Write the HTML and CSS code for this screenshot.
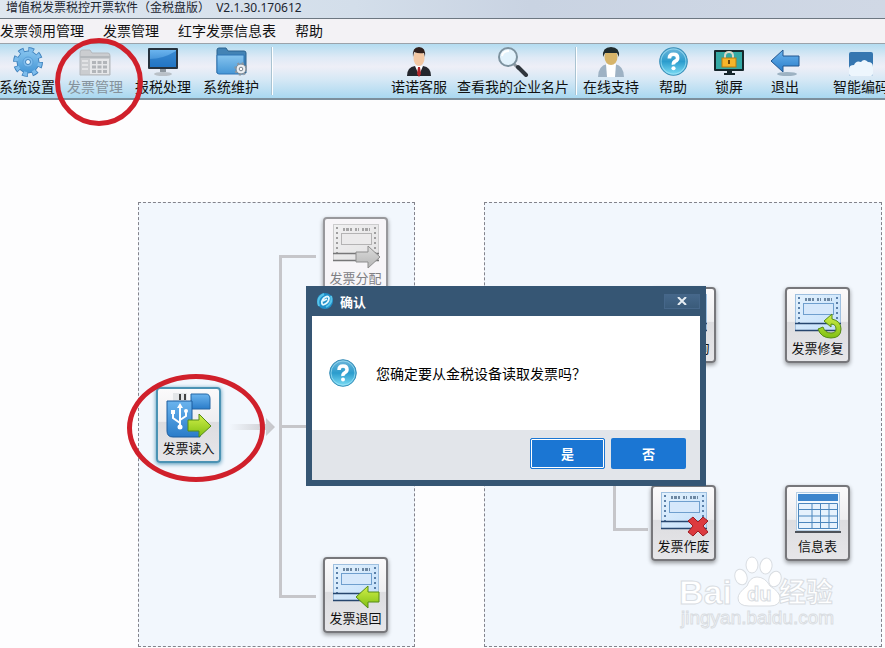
FILE: index.html
```
<!DOCTYPE html>
<html lang="zh-CN">
<head>
  <meta charset="UTF-8" />
  <meta name="viewport" content="width=device-width, initial-scale=1.0"/>
  <title>增值税发票税控开票软件（金税盘版）</title>
  <link rel="stylesheet" href="styles.css">
</head>
<body>
  <!-- shared gradients and symbols -->
  <svg class="defs" aria-hidden="true">
    <defs>
      <linearGradient id="blue" x1="0" y1="0" x2="0" y2="1">
        <stop offset="0" stop-color="#6bb4ee"/><stop offset="1" stop-color="#2a7cc9"/>
      </linearGradient>
      <linearGradient id="folder" x1="0" y1="0" x2="0" y2="1">
        <stop offset="0" stop-color="#86c4ee"/><stop offset="1" stop-color="#4596d6"/>
      </linearGradient>
      <linearGradient id="sky" x1="0" y1="0" x2="0" y2="1">
        <stop offset="0" stop-color="#6fb6da"/><stop offset=".5" stop-color="#2b9ccd"/><stop offset="1" stop-color="#7fe0f7"/>
      </linearGradient>
      <linearGradient id="green" x1="0" y1="0" x2="0" y2="1">
        <stop offset="0" stop-color="#d3f04a"/><stop offset="1" stop-color="#7fbf12"/>
      </linearGradient>
      <linearGradient id="gray" x1="0" y1="0" x2="0" y2="1">
        <stop offset="0" stop-color="#dcdcdc"/><stop offset="1" stop-color="#b5b5b5"/>
      </linearGradient>
      <linearGradient id="paper" x1="0" y1="0" x2="1" y2="1">
        <stop offset="0" stop-color="#e3f1fd"/><stop offset="1" stop-color="#c3dffa"/>
      </linearGradient>
      <linearGradient id="fade" x1="0" y1="0" x2="1" y2="0">
        <stop offset="0" stop-color="#c8c8cc" stop-opacity="0"/><stop offset="1" stop-color="#c4c4c8"/>
      </linearGradient>
    </defs>
    <symbol id="invoice" viewBox="0 0 48 46">
      <rect x="1.500" y="1.500" width="45" height="36" fill="url(#paper)" stroke="#9fc0e0"/>
      <path d="M5 4v26M43 4v26" stroke="#5a7fa8" stroke-width="2" stroke-dasharray="2 3"/>
      <path d="M11 6.500h9M23 6.500h4M30 6.500h8" stroke="#6d87a2" stroke-width="3" stroke-dasharray="2 1 3 1"/>
      <rect x="9.500" y="10.500" width="30" height="11" fill="#d6e8fb" stroke="#6f9fce"/>
      <path d="M1 30.500h46M1 37.500h46" stroke="#27466e" stroke-width="1.500"/>
    </symbol>
    <symbol id="help" viewBox="0 0 28 28">
      <circle cx="14" cy="14" r="13.300" fill="url(#sky)" stroke="#3a8fb8"/>
      <circle cx="14" cy="14" r="12" fill="none" stroke="#a5e2f5" stroke-opacity=".7"/>
      <path d="M10 11q0-4 4-4t4 3.500q0 2-2.200 3.200T14 17" fill="none" stroke="#fff" stroke-width="3.500"/>
      <circle cx="14" cy="20.500" r="2" fill="#fff"/>
    </symbol>
  </svg>

  <header class="titlebar">
    <h1>增值税发票税控开票软件（金税盘版） <span>V2.1.30.170612</span></h1>
  </header>

  <nav class="menubar">
    <button>发票领用管理</button>
    <button>发票管理</button>
    <button>红字发票信息表</button>
    <button>帮助</button>
  </nav>

  <div class="toolbar">
    <div class="tools main-tools">
      <button class="tool">
        <svg viewBox="0 0 32 30">
          <circle cx="17" cy="15" r="12.500" fill="none" stroke="#3f82bd" stroke-width="5" stroke-dasharray="5.500 4.317"/>
          <circle cx="17" cy="15" r="11" fill="url(#folder)" stroke="#3f82bd"/>
          <circle cx="17" cy="15" r="12" fill="none" stroke="#7dbcec" stroke-width="4" stroke-dasharray="3.900 5.525" stroke-dashoffset="-.7"/>
          <circle cx="17" cy="15" r="5" fill="#7fbeee" stroke="#5a9fd8"/>
          <circle cx="17" cy="15" r="2.500" fill="#e8f5fd" stroke="#3b7fba"/>
        </svg>
        <span>系统设置</span>
      </button>
      <button class="tool" disabled>
        <svg viewBox="0 0 32 30">
          <path d="M1 6q0-3 2-3h8l2 3h16q2 0 2 3v19H1z" fill="#cbcdd0" stroke="#b4b8bc"/>
          <path d="M1 10h30" stroke="#b4b8bc" stroke-width="2"/>
          <path d="M3 14h6M3 18h6M3 22h6" stroke="#e2e3e5" stroke-width="2"/>
          <path d="M11 12h19v15H11z" fill="#e6e7e9"/>
          <path d="M13 15.500h15M13 20h15M13 24.500h15" stroke="#b2b5b9" stroke-width="3" stroke-dasharray="4 1.500"/>
        </svg>
        <span>发票管理</span>
      </button>
      <button class="tool">
        <svg viewBox="0 0 32 30">
          <rect x="1" y="1" width="30" height="21" rx="1" fill="#26323e"/>
          <rect x="3" y="3" width="26" height="17" fill="url(#blue)"/>
          <path d="M3 20V12Q16 12 29 4v16z" fill="#1d6fc0" opacity=".6"/>
          <path d="M13 22h6v3h-6z" fill="#8d969e"/>
          <ellipse cx="16" cy="27" rx="9" ry="2" fill="#b9c0c7"/>
        </svg>
        <span>报税处理</span>
      </button>
      <button class="tool">
        <svg viewBox="0 0 32 30">
          <path d="M2 3q0-2 2-2h7l2 3h16q2 0 2 2v20H2z" fill="#4383b5" stroke="#2b638f"/>
          <path d="M2 8h27v18q0 1-1 1H4q-2 0-2-2z" fill="url(#folder)" stroke="#2f75b5"/>
          <circle cx="26" cy="22" r="5" fill="#e5e9ed" stroke="#77828c"/>
          <circle cx="26" cy="22" r="5.800" fill="none" stroke="#8c969f" stroke-width="2" stroke-dasharray="2 2.560"/>
          <circle cx="26" cy="22" r="4" fill="#eceff2"/>
          <circle cx="26" cy="22" r="1.800" fill="#fff" stroke="#77828c"/>
        </svg>
        <span>系统维护</span>
      </button>
      <span class="sep"></span>
    </div>

    <div class="tools service-tools">
      <button class="tool">
        <svg viewBox="0 0 32 30">
          <path d="M4 29q0-9 8-10h8q8 1 8 10z" fill="#23262d"/>
          <path d="M12 19l4 9 4-9z" fill="#fff"/>
          <path d="M15 20h2l1 7-2 3-2-3z" fill="#b3262b"/>
          <ellipse cx="16" cy="11" rx="5.500" ry="8" fill="#f3c8a4"/>
          <path d="M10 10Q9 0 16 0t6 10l-1-4q-5 1-10-1z" fill="#30201d"/>
        </svg>
        <span>诺诺客服</span>
      </button>
      <button class="tool">
        <svg viewBox="0 0 32 30">
          <path d="M17 17l5 5" stroke="#8d969e" stroke-width="3"/>
          <path d="M21 20l8 8" stroke="#30363d" stroke-width="4" stroke-linecap="round"/>
          <circle cx="11" cy="10" r="9" fill="#e2f2fc" stroke="#7d929f" stroke-width="2"/>
          <path d="M5 9q1-5 7-5" stroke="#fff" stroke-width="2" fill="none"/>
        </svg>
        <span>查看我的企业名片</span>
      </button>
      <span class="sep"></span>
      <div class="tools">
        <button class="tool">
          <svg viewBox="0 0 32 30">
            <path d="M3 30q0-11 9-13h8q9 2 9 13z" fill="#9eb2c4"/>
            <path d="M11 17h10l-1 13h-8z" fill="#fff"/>
            <ellipse cx="16" cy="10" rx="6.500" ry="8" fill="#d7b469"/>
            <path d="M8 10Q7 0 16 0t8 10l-2-4H10z" fill="#1f2b2d"/>
          </svg>
          <span>在线支持</span>
        </button>
      </div>
      <div class="tools">
        <button class="tool">
          <svg viewBox="0 0 30 30"><use href="#help" x="1" y="0" width="29" height="29"/></svg>
          <span>帮助</span>
        </button>
        <button class="tool">
          <svg viewBox="0 0 32 30">
            <rect x="1" y="3" width="30" height="21" rx="1" fill="#15262b"/>
            <rect x="3" y="5" width="26" height="17" fill="#35a9a5"/>
            <path d="M14 24h5v2h-5zM11 26h11v2H11z" fill="#15262b"/>
            <path d="M12 12V9q0-4 4-4t4 4v3" fill="none" stroke="#d9d9c8" stroke-width="2"/>
            <rect x="9" y="11" width="14" height="9" fill="#f6b52a" stroke="#b97c10"/>
            <path d="M16 13v4" stroke="#6e4707" stroke-width="2"/>
          </svg>
          <span>锁屏</span>
        </button>
        <button class="tool">
          <svg viewBox="0 0 32 30">
            <ellipse cx="18" cy="27" rx="10" ry="2" fill="#8ca4b5" opacity=".8"/>
            <path d="M2 14L14 3v6h16v10H14v6z" fill="url(#blue)" stroke="#23578f"/>
          </svg>
          <span>退出</span>
        </button>
      </div>
      <button class="tool code-tool">
        <svg viewBox="0 0 32 30">
          <rect x="4" y="5" width="24" height="24" rx="2" fill="#3576b0"/>
          <path d="M4 22q0-4 5-4 2-5 7-3 3-4 7 0 5 0 5 5v7q0 2-2 2H6q-2 0-2-2z" fill="#edf6fd"/>
        </svg>
        <span>智能编码</span>
      </button>
    </div>
  </div>

  <main class="workspace">
    <section class="panel read-panel">
      <svg class="links" width="180" height="400">
        <path d="M177 53.500h-35.500v340H177M142 223.500h30" fill="none" stroke="#c6c6ca" stroke-width="3"/>
        <path d="M90 221h37v-6l9 9-9 9v-6H90z" fill="url(#fade)"/>
      </svg>
      <button class="node assign" disabled>
        <svg viewBox="0 0 48 46">
          <g class="dim"><use href="#invoice" width="48" height="46"/></g>
          <path d="M24 29h12v-6l12 11-12 11v-6H24z" fill="url(#gray)" stroke="#8d8d8d"/>
        </svg>
        <span>发票分配</span>
      </button>
      <button class="node read">
        <svg viewBox="0 0 48 46">
          <path d="M26 1h15q4 0 4 5v10H26z" fill="url(#blue)" stroke="#2467a5"/>
          <path d="M8 0h14v9H8z" fill="#e4e6e8"/><path d="M15 1v6M20 1v6" stroke="#444" stroke-width="2"/>
          <path d="M2 8h25v28h8v8H8q-6 0-6-6z" fill="url(#blue)" stroke="#1d5c9e"/>
          <path d="M15 33V13M15 30l-7-5v-6M15 27l6-4v-5" fill="none" stroke="#fff" stroke-width="2"/>
          <path d="M12 15l3-5 3 5zM6 17h4v4H6z" fill="#fff"/><circle cx="21" cy="18" r="2" fill="#fff"/><circle cx="15" cy="34" r="2.500" fill="#fff"/>
          <path d="M23 27h11v-6l12 12-12 11v-6H23z" fill="url(#green)" stroke="#568b16"/>
        </svg>
        <span>发票读入</span>
      </button>
      <button class="node back">
        <svg viewBox="0 0 48 46">
          <use href="#invoice" width="48" height="46"/>
          <path d="M47 29H36v-6L24 34l12 11v-6h11z" fill="url(#green)" stroke="#568b16"/>
        </svg>
        <span>发票退回</span>
      </button>
    </section>

    <section class="panel void-panel">
      <svg class="links" width="180" height="400">
        <path d="M129.500 200v126.500H163" fill="none" stroke="#c6c6ca" stroke-width="3"/>
      </svg>
      <button class="node query">
        <svg viewBox="0 0 48 46"><use href="#invoice" width="48" height="46"/></svg>
        <span>发票查询</span>
      </button>
      <button class="node repair">
        <svg viewBox="0 0 48 46">
          <use href="#invoice" width="48" height="46"/>
          <path d="M30 28l8-7v5q9 2 9 10 0 9-10 9-10 0-13-9l5-2q2 6 8 6 5 0 5-4 0-5-5-5v3z" fill="url(#green)" stroke="#568b16"/>
        </svg>
        <span>发票修复</span>
      </button>
      <button class="node void">
        <svg viewBox="0 0 48 46">
          <use href="#invoice" width="48" height="46"/>
          <path d="M28 30l5-4 5 5 5-5 5 4-5 5 5 6-5 4-5-5-5 5-5-4 5-6z" fill="#dc3a3f" stroke="#9c1c22"/>
        </svg>
        <span>发票作废</span>
      </button>
      <button class="node info">
        <svg viewBox="0 0 48 46">
          <rect x="2.500" y="1.500" width="43" height="38" fill="#f4faff" stroke="#b8cfe4"/>
          <path d="M4 3h40v7H4z" fill="#3d85cc"/>
          <path d="M4.500 12.500h39v25h-39zM4.500 18.500h39M4.500 25h39M4.500 31.500h39M18 12.500v25M26.500 12.500v25M35 12.500v25" fill="#e6f2fd" stroke="#4b86bd"/>
          <path d="M1 41h46" stroke="#1d232b" stroke-width="1.500"/>
        </svg>
        <span>信息表</span>
      </button>
      <svg class="watermark" width="164" height="84">
        <g fill="#fff" stroke="#d9dde2">
          <ellipse cx="65" cy="24" rx="6" ry="8" transform="rotate(-20 65 24)"/>
          <ellipse cx="76" cy="12" rx="6" ry="8"/>
          <ellipse cx="90" cy="13" rx="6" ry="8" transform="rotate(10 90 13)"/>
          <ellipse cx="99" cy="26" rx="6" ry="8" transform="rotate(20 99 26)"/>
          <path d="M81 24q8 0 13 9 10 6 10 12 0 8-10 8H73q-11 0-11-8 0-5 9-12 3-9 10-9z"/>
          <text x="3" y="51" class="wm-big">Bai</text>
          <text x="71" y="48" class="wm-du">du</text>
          <text x="103" y="49" class="wm-cn">经验</text>
          <text x="5" y="71" class="wm-url">jingyan.baidu.com</text>
        </g>
      </svg>
    </section>
  </main>

  <!-- confirm dialog -->
  <div class="dialog" role="dialog" aria-labelledby="dialog-title">
    <div class="dialog-head">
      <svg viewBox="0 0 18 18">
        <circle cx="9" cy="9" r="8" fill="#1f8fc9"/>
        <path d="M3 14Q0 6 8 2M15 4q2 7-5 11" fill="none" stroke="#57c4ea" stroke-width="2"/>
        <path d="M7 13q-3-3 1-7 4-3 5 0 0 5-6 7M7 9l4-2" fill="none" stroke="#e4f8fe" stroke-width="1.800"/>
      </svg>
      <h2 id="dialog-title">确认</h2>
      <button class="close" aria-label="关闭">
        <svg viewBox="0 0 10 8"><path d="M1 0l8 8M9 0L1 8" stroke="#e6edf3" stroke-width="2"/></svg>
      </button>
    </div>
    <div class="dialog-body">
      <svg viewBox="0 0 28 28"><use href="#help"/></svg>
      <p>您确定要从金税设备读取发票吗？</p>
    </div>
    <div class="dialog-foot">
      <button class="choice default">是</button>
      <button class="choice">否</button>
    </div>
  </div>

  <!-- red marks -->
  <div class="mark mark-tool"></div>
  <div class="mark mark-node"></div>
</body>
</html>
```
FILE: styles.css
```
* {
  box-sizing: border-box;
}
body {
  margin: 0;
  height: 100vh;
  position: relative;
  display: flex;
  flex-direction: column;
  overflow: hidden;
  background: #fdfdfe;
  color: #111;
  font-family: "Noto Sans", "Noto Sans CJK SC", sans-serif;
  font-size: 14px;
}
button {
  margin: 0;
  padding: 0;
  border: none;
  background: none;
  color: inherit;
  font: inherit;
  white-space: nowrap;
}
svg {
  display: block;
  flex: none;
}
.defs {
  position: absolute;
  width: 0;
  height: 0;
}

/* title and menu */
.titlebar {
  height: 19px;
  padding-left: 6px;
  background: linear-gradient(90deg, #dfe7f0, #d3deea 40%, #c9d3e2 60%, #d0d8e5);
  border-bottom: 1px solid #6d7781;
}
h1 {
  margin: 0;
  font-size: 12px;
  line-height: 16px;
  font-weight: normal;
  color: #1c2530;
}
h1 span {
  margin-left: 3px;
}
.menubar {
  display: flex;
  gap: 19px;
  height: 25px;
  background: #f3f2f5;
  border-bottom: 1px solid #9ba3aa;
}
.menubar button {
  line-height: 24px;
}

/* toolbar */
.toolbar {
  display: flex;
  justify-content: space-between;
  height: 56px;
  padding-top: 3px;
  background: linear-gradient(#b3dcf0, #dfeaf6 25%, #eeeff7 42%, #d3e7f5 68%, #a9d8f0);
  border-bottom: 2px solid #7c8f9c;
}
.tools {
  display: flex;
}
.main-tools {
  gap: 12px;
  margin-left: -1px;
}
.service-tools {
  gap: 6px;
  margin-right: -4px;
}
.service-tools > .tool + .tool {
  margin-left: 4px;
}
.service-tools > .code-tool {
  margin-left: 14px;
}
.tool {
  display: flex;
  flex-direction: column;
  align-items: center;
  min-width: 56px;
  line-height: 20px;
}
.tool svg {
  width: 32px;
  height: 30px;
}
.tool:disabled {
  color: #85929c;
}
.sep {
  width: 2px;
  height: 48px;
  background: #fff;
  border-left: 1px solid #a9c3d2;
}

/* flow chart */
.workspace {
  flex: 1;
  display: grid;
  grid-template-columns: 277fr 398fr;
  gap: 69px;
  padding: 102px 3px 1px 138px;
}
.panel {
  position: relative;
  background: #f2f7fd;
  border: 1px dashed #83838c;
}
.links {
  position: absolute;
  left: 0;
  top: 0;
}
.node {
  position: absolute;
  display: flex;
  flex-direction: column;
  align-items: center;
  width: 65px;
  height: 76px;
  padding-top: 4px;
  background: linear-gradient(#fbfafb, #eeeef0 45%, #dddde0 46%, #e6e6e9);
  border: 2px solid #77777b;
  border-radius: 4px;
  box-shadow: 0 2px 4px rgba(0,0,0,0.4);
  font-size: 13px;
  line-height: 18px;
}
.node svg {
  width: 48px;
  height: 46px;
}
.node:disabled {
  background: #f7f5f8;
  border-color: #98989c;
  color: #808084;
}
.dim {
  filter: grayscale(1);
  opacity: 0.7;
}
.assign { left: 184px; top: 14px; }
.back { left: 184px; top: 354px; }
.read {
  left: 17px;
  top: 184px;
  border-color: #4b93b4;
  box-shadow: 0 1px 4px #4b93b4;
}
.query { left: 166px; top: 84px; }
.repair { left: 300px; top: 84px; }
.void { left: 166px; top: 282px; }
.info { left: 300px; top: 282px; }

.watermark {
  position: absolute;
  left: 191px;
  top: 350px;
  font-family: "Liberation Sans", "Noto Sans CJK SC", sans-serif;
}
.wm-big { font-size: 34px; font-weight: bold; }
.wm-du { font-size: 20px; font-weight: bold; }
.wm-cn { font-size: 27px; font-weight: bold; }
.wm-url { font-size: 19px; }

/* dialog */
.dialog {
  position: absolute;
  left: 306px;
  top: 286px;
  width: 400px;
  padding: 0 6px 6px;
  background: #365674;
}
.dialog-head {
  display: flex;
  align-items: center;
  gap: 6px;
  height: 30px;
  padding-left: 4px;
  color: #fff;
}
.dialog-head > svg {
  width: 18px;
  height: 18px;
}
h2 {
  margin: 0;
  flex: 1;
  font-size: 13px;
}
.close {
  display: flex;
  align-items: center;
  justify-content: center;
  width: 36px;
  height: 15px;
  background: linear-gradient(#45678a, #3a5b7a);
  border: 1px solid #46678a;
}
.close svg {
  width: 10px;
  height: 8px;
}
.dialog-body {
  display: flex;
  align-items: center;
  gap: 19px;
  height: 114px;
  padding-left: 17px;
  background: #fff;
  color: #000;
}
.dialog-body svg {
  width: 28px;
  height: 28px;
}
p {
  margin: 0;
}
.dialog-foot {
  display: flex;
  justify-content: flex-end;
  gap: 6px;
  height: 50px;
  padding: 8px 14px 0 0;
  background: #e2e5ea;
}
.choice {
  width: 75px;
  height: 31px;
  background: #1b76d3;
  border-radius: 2px;
  color: #fff;
  font-size: 13px;
  font-weight: bold;
}
.choice.default {
  border: 1px solid #1b76d3;
  box-shadow: inset 0 0 0 1px #fff;
}

.mark {
  position: absolute;
  border: 5px solid #d0202b;
  border-radius: 50%;
  pointer-events: none;
}
.mark-tool {
  left: 55px;
  top: 38px;
  width: 88px;
  height: 88px;
}
.mark-node {
  left: 127px;
  top: 374px;
  width: 138px;
  height: 108px;
}
```
